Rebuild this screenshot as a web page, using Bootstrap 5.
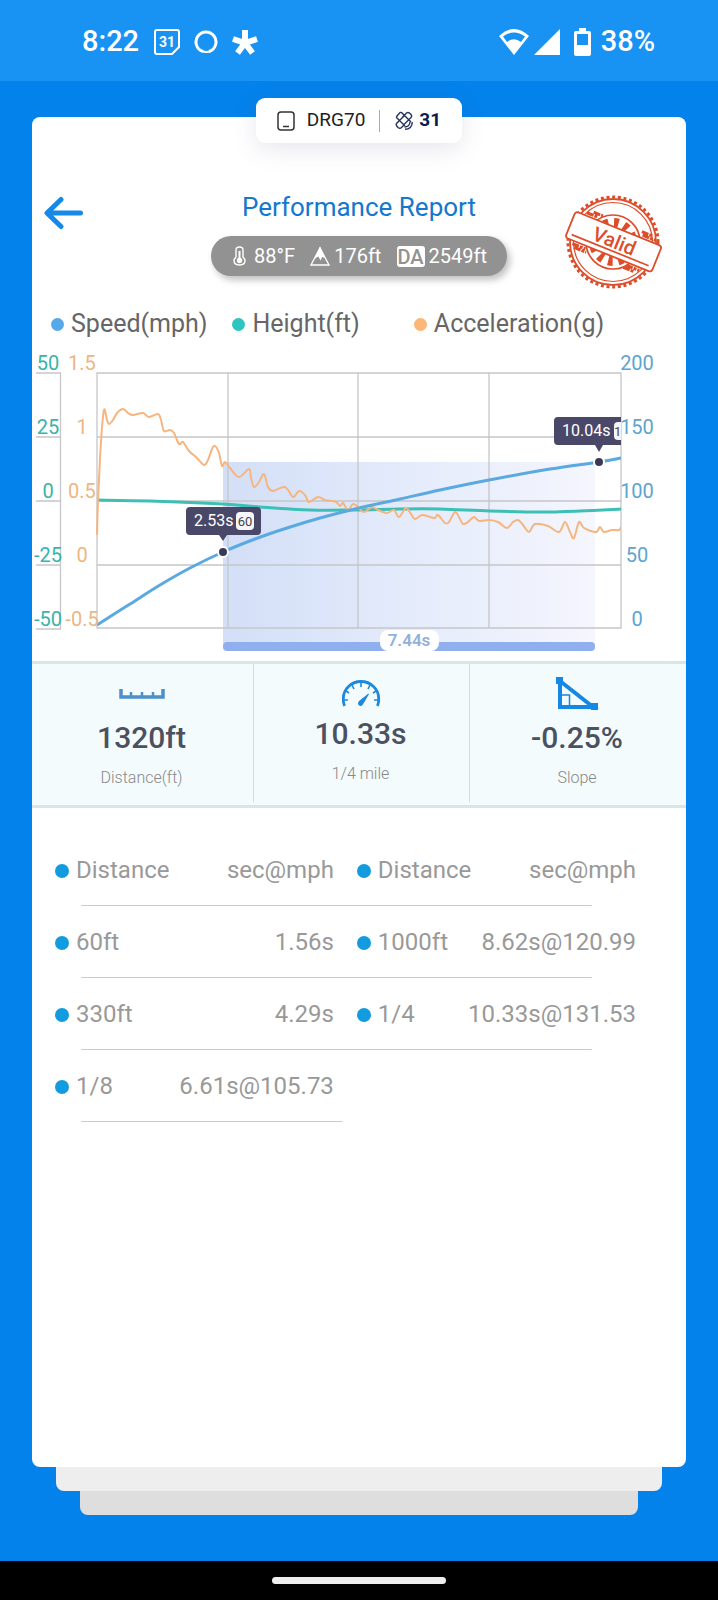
<!DOCTYPE html>
<html lang="en">
<head>
<meta charset="utf-8">
<meta name="viewport" content="width=device-width, initial-scale=1">
<title>Performance Report</title>
<link href="https://cdn.jsdelivr.net/npm/bootstrap@5.3.0/dist/css/bootstrap.min.css" rel="stylesheet">
<style>
  body { font-family: Roboto, "Liberation Sans", sans-serif; background: #0482eb; color: #666; }
  svg { display: block; flex: none; }
  .status-bar { height: 81px; background: #1893f4; color: #fff; padding: 2px 63px 0 82px; font-size: 29px; font-weight: 500; }
  .status-icons { gap: 14px; margin-left: 15px; }
  .stage { padding: 36px 32px 46px; }
  .sheet { border-radius: 8px; }
  .sheet-under { height: 24px; border-radius: 0 0 8px 8px; }
  .sheet-mid { margin: 0 24px; background: #eee; }
  .sheet-low { margin: 0 48px; background: #dedede; }
  .device-pill { height: 45px; width: 206px; margin-top: -19px; border-radius: 9px; font-size: 19px; color: #222; box-shadow: 0 6px 24px rgba(60, 70, 110, .13); }
  .device-pill .sep { width: 1px; height: 22px; margin: 0 15px 0 14px; background: #aaa; }
  .device-pill strong { color: #0d1b52; margin-left: 6px; }
  .report-head { display: grid; grid-template-columns: 1fr auto 1fr; margin-top: 48px; padding: 0 12px; height: 102px; }
  .report-title { font-size: 26px; line-height: 32px; font-weight: 400; color: #1478cd; margin-bottom: 13px; }
  .weather { width: 296px; height: 40px; border-radius: 20px; background: #929292; color: #fff; font-size: 20px; padding: 0 20px 0 22px; box-shadow: 3px 4px 7px rgba(0, 0, 0, .25); }
  .da-tag { background: #fff; color: #929292; border-radius: 3px; width: 28px; height: 21px; line-height: 22px; text-align: center; font-weight: 500; }
  .stamp { margin: 2px 10px 0 auto; }
  .legend-row { display: grid; grid-template-columns: 2fr 2fr 3fr; padding-left: 19px; margin-top: 13px; margin-bottom: 3px; font-size: 25px; line-height: 36px; }
  .key-dot { width: 13px; height: 13px; border-radius: 50%; margin-right: 7px; }
  .chart { width: 100%; height: auto; }
  .chart text { font-family: Roboto, "Liberation Sans", sans-serif; }
  .stats { display: grid; grid-template-columns: 221fr 216fr 217fr; height: 147px; background: #f3fbfc; border-top: 3px solid #d7e6e6; border-bottom: 3px solid #d7e6e6; text-align: center; }
  .stat { padding-right: 2px; }
  .stat + .stat { border-left: 1px solid #cfdfe1; margin-bottom: 3px; }
  .stat-icon { height: 48px; }
  .stat-value { font-size: 30px; line-height: 36px; font-weight: 500; color: #4c505f; }
  .stat-label { font-size: 16px; line-height: 20px; margin-top: 12px; font-weight: 300; color: #888; }
  .splits { table-layout: fixed; margin: 26px 50px 0 23px; width: calc(100% - 73px); font-size: 24px; line-height: 30px; color: #999; white-space: nowrap; }
  .splits tr { height: 72px; background: linear-gradient(#ccc, #ccc) no-repeat 26px 100% / 88% 1px; }
  .splits tbody tr:last-child { background-size: 45% 1px; }
  .splits th, .splits td { font-weight: 400; padding: 0; }
  .splits .wide-name { padding-left: 23px; }
  .splits .name::before { content: ""; display: inline-block; width: 14px; height: 14px; margin-right: 7px; border-radius: 50%; background: #129cdf; }
  .nav-strip { height: 39px; background: #000; }
  .nav-strip span { width: 174px; height: 7px; border-radius: 4px; background: #eee; }
</style>
</head>
<body class="d-flex flex-column min-vh-100">

<header class="status-bar d-flex align-items-center">
  <span>8:22</span>
  <div class="status-icons d-flex align-items-center">
    <svg width="26" height="26" viewBox="0 0 26 26" fill="none" stroke="#fff" stroke-width="2"><path d="M3 1H23Q25 1 25 3V18L18 25H3Q1 25 1 23V3Q1 1 3 1Z"/><text x="13" y="18" text-anchor="middle" font-size="14" font-weight="700" fill="#fff" stroke="none">31</text></svg>
    <svg width="24" height="24" viewBox="0 0 24 24" fill="none" stroke="#fff"><path d="M9 21.500A10 10 0 1 1 15 21.500" stroke-width="3"/><path d="M9 21.500Q17 23.500 20.500 17" stroke-width="2"/></svg>
    <svg width="26" height="26" viewBox="0 0 26 26" stroke="#fff" stroke-width="6"><path d="M13 14V1M13 14L25 10M13 14L20.500 24M13 14L5.500 24M13 14L1 10"/></svg>
  </div>
  <div class="ms-auto d-flex align-items-center">
    <svg width="32" height="28" viewBox="0 0 32 28"><path d="M16 27L1 8Q16-6 31 8Z" fill="#fff"/><path d="M9 14L5 8.500Q16 .500 27 8.500L23 14Q16 8.500 9 14Z" fill="#1893f4"/></svg>
    <svg class="ms-1" width="26" height="26" viewBox="0 0 26 26"><path d="M0 26H26V0Z" fill="#fff"/></svg>
    <svg class="ms-2 me-2" width="25" height="28" viewBox="-4 0 21 28"><path d="M5 0H12V3H15Q17 3 17 5V26Q17 28 15 28H2Q0 28 0 26V5Q0 3 2 3H5Z" fill="#fff"/><path d="M3 6H14V17H3Z" fill="#1893f4"/></svg>
    <span>38%</span>
  </div>
</header>

<main class="stage flex-grow-1 d-flex flex-column">
  <section class="sheet bg-white flex-grow-1">
    <div class="device-pill bg-white mx-auto position-relative d-flex align-items-center justify-content-center">
      <svg width="18" height="20" viewBox="0 0 18 20" fill="none" stroke="#333" stroke-width="1.500"><rect x="1" y="1" width="16" height="18" rx="3"/><path d="M6 15.500H12"/></svg>
      <span class="ms-2 ps-1">DRG70</span>
      <span class="sep"></span>
      <svg width="18" height="19" viewBox="0 0 18 19" fill="none" stroke="#26335c" stroke-width="1.400"><path d="M2 5L5 1.500Q6.500 1 7.500 2.500L16 11M2 5Q1 6.500 2.500 7.500L10 15M7.500 6L11.500 2Q13.500 .500 15.500 3Q17.500 5 16 6.500L12 10.500M5 9L1.500 12.500Q.500 14 3 16.500Q5 18 6.500 16.500L9.500 13.500M5 9L9 5M9 13.500L13 9.500M9.500 16Q14.500 16 15 11M10 18.300Q17 18.300 17.300 11"/></svg>
      <strong>31</strong>
    </div>

    <div class="report-head">
      <button type="button" class="btn p-0 border-0 align-self-start mt-1 text-start" aria-label="Back">
        <svg width="40" height="38" viewBox="0 0 40 38" fill="none" stroke="#1588e8" stroke-width="5" stroke-linecap="round" stroke-linejoin="round"><path d="M36.500 18H4M17 4.500L3 18L17 31.500"/></svg>
      </button>
      <div class="text-center">
        <h1 class="report-title">Performance Report</h1>
        <div class="weather d-flex align-items-center justify-content-between">
          <span class="d-flex align-items-center gap-2"><svg width="13" height="20" viewBox="0 0 13 20" fill="none" stroke="#fff" stroke-width="1.400"><path d="M3 11V4Q3 1 6.500 1T10 4V11Q12 13 12 14.500Q12 19 6.500 19T1 14.500Q1 13 3 11Z"/><path d="M6.500 5V13" stroke-width="2"/><circle cx="6.500" cy="14.500" r="2" fill="#fff"/></svg>88°F</span>
          <span class="d-flex align-items-center gap-1"><svg width="20" height="20" viewBox="0 0 20 20" fill="none" stroke="#fff" stroke-width="1.300"><path d="M10 2L19 19H1Z"/><path d="M10 2L14.500 11.500L12 9.500L10.500 13L8.500 9.500L5.500 11.500Z" fill="#fff"/></svg>176ft</span>
          <span class="d-flex align-items-center gap-1"><span class="da-tag">DA</span>2549ft</span>
        </div>
      </div>
      <svg class="stamp" width="100" height="98" viewBox="0 0 100 98" fill="none" stroke="#dc4e2b" role="img" aria-label="Valid">
        <circle cx="49" cy="49" r="45" stroke-width="3" stroke-dasharray="3 2.700"/>
        <circle cx="49" cy="49" r="43" stroke-width="1.800"/>
        <circle cx="49" cy="49" r="39.500" stroke-width="1.200"/>
        <circle cx="49" cy="49" r="27" stroke-width="1.700"/>
        <circle cx="49" cy="49" r="19" stroke-width="10" stroke-dasharray="4.500 5.500"/>
        <g transform="rotate(22 50 49)">
          <path d="M14 32H26M20 29H30M72 29H84M74 32H88M12 66H26M15 69H28M70 66H84M68 69H80" stroke-width="3" stroke-dasharray="7 1 3 1"/>
          <rect x="3" y="35" width="93" height="28" rx="3" fill="#fff" stroke-width="1.800"/>
          <path d="M8 58H91" stroke-width="1.700"/>
          <text x="50" y="55" text-anchor="middle" font-size="20" font-weight="500" fill="#dc4e2b" stroke="none">Valid</text>
        </g>
      </svg>
    </div>

    <div class="legend-row">
      <span class="d-flex align-items-center"><span class="key-dot" style="background:#55a9e8"></span>Speed(mph)</span>
      <span class="d-flex align-items-center"><span class="key-dot" style="background:#2dc5bd"></span>Height(ft)</span>
      <span class="d-flex align-items-center"><span class="key-dot" style="background:#fbb678"></span>Acceleration(g)</span>
    </div>

    <svg class="chart" viewBox="32 345 654 316">
      <defs>
        <linearGradient id="band"><stop offset="0" stop-color="#d3dff7"/><stop offset=".5" stop-color="#e4ebfb"/><stop offset="1" stop-color="#f5f6fe"/></linearGradient>
        <clipPath id="plot"><rect x="96" y="372" width="525" height="280"/></clipPath>
      </defs>
      <path d="M223 462H595V646H223Z" fill="url(#band)"/>
      <g fill="none" stroke="#c6c6c8" stroke-width="1.300">
        <path d="M36 373H60.500V629H36M36 437H60M36 501H60M36 565H60"/>
        <path d="M97 373H621V628H97ZM97 437H621M97 501H621M97 565H621M228 373V628M358 373V628M489 373V628"/>
      </g>
      <g id="series" fill="none" stroke-linejoin="round" clip-path="url(#plot)"></g>
      <g id="labels" font-size="20" text-anchor="middle"></g>
      <rect x="223" y="642" width="372" height="9" rx="4" fill="#90afee"/>
      <rect x="380" y="630" width="59" height="21" rx="8" fill="#fff"/>
      <text x="409" y="646" text-anchor="middle" font-size="17" font-weight="600" fill="#8fb1de">7.44s</text>
      <g>
        <path d="M190 507H257Q261 507 261 511V531Q261 535 257 535H227L223 541L219 535H190Q186 535 186 531V511Q186 507 190 507Z" fill="#4a4868"/>
        <text x="194" y="526" font-size="16" fill="#fff">2.53s</text>
        <rect x="236" y="512" width="18" height="18" rx="4" fill="#f5f5fa"/>
        <text x="245" y="526" font-size="13" text-anchor="middle" fill="#444">60</text>
        <circle cx="223" cy="552" r="5" fill="#3a3858" stroke="#fff" stroke-width="2"/>
      </g>
      <g clip-path="url(#plot)">
        <path d="M558 417H640V445H603L599 452L595 445H558Q554 445 554 441V421Q554 417 558 417Z" fill="#4a4868"/>
        <text x="562" y="436" font-size="16" fill="#fff">10.04s</text>
        <rect x="614" y="422" width="26" height="18" rx="4" fill="#f5f5fa"/>
        <text x="614" y="436" font-size="13" fill="#444">1</text>
        <circle cx="599" cy="462" r="5" fill="#3a3858" stroke="#fff" stroke-width="2"/>
      </g>
    </svg>

    <div class="stats">
      <div class="stat">
        <div class="stat-icon d-flex justify-content-center align-items-center pt-2"><svg class="mt-1" width="46" height="10" viewBox="0 0 46 10" fill="none" stroke="#4c8fc9"><path d="M2 0V8H44V0" stroke-width="3.500"/><path d="M12 3V8M23 3V8M34 3V8" stroke-width="2.500"/></svg></div>
        <div class="stat-value mt-2">1320ft</div>
        <div class="stat-label">Distance(ft)</div>
      </div>
      <div class="stat">
        <div class="stat-icon d-flex justify-content-center align-items-end"><svg class="mb-1" width="40" height="28" viewBox="0 0 40 28" fill="none" stroke="#1c89dc"><path d="M3.500 26Q2 22 2.300 18.500A17.700 17 0 0 1 37.700 18.500Q38 22 36.500 26" stroke-width="2.800"/><path d="M20 2V7M11 5L13 9M29 5L27 9M5 11L8 13M35 11L32 13M3 20H7M37 20H33" stroke-width="1.600"/><path d="M27.500 14L18 21.500Q16.500 25 19 25.500Q21 26 22 23.500Z" fill="#1c89dc"/></svg></div>
        <div class="stat-value mt-1">10.33s</div>
        <div class="stat-label">1/4 mile</div>
      </div>
      <div class="stat">
        <div class="stat-icon d-flex justify-content-center align-items-end"><svg width="44" height="36" viewBox="0 0 44 36" fill="none" stroke="#1588e5"><path d="M5 5V31H38Z" stroke-width="4"/><path d="M5 19H14.500V31" stroke-width="1.500"/><path d="M1 1H8V8H1ZM36 27H43V34H36Z" fill="#1588e5" stroke="none"/></svg></div>
        <div class="stat-value mt-2">-0.25%</div>
        <div class="stat-label">Slope</div>
      </div>
    </div>

    <table class="splits">
      <colgroup><col style="width:19%"><col style="width:29%"><col style="width:23%"><col style="width:29%"></colgroup>
      <thead>
        <tr><th scope="col" class="name">Distance</th><th scope="col" class="text-end">sec@mph</th><th scope="col" class="name wide-name">Distance</th><th scope="col" class="text-end">sec@mph</th></tr>
      </thead>
      <tbody>
        <tr><td class="name">60ft</td><td class="text-end">1.56s</td><td class="name wide-name">1000ft</td><td class="text-end">8.62s@120.99</td></tr>
        <tr><td class="name">330ft</td><td class="text-end">4.29s</td><td class="name wide-name">1/4</td><td class="text-end">10.33s@131.53</td></tr>
        <tr><td class="name">1/8</td><td class="text-end">6.61s@105.73</td><td></td><td></td></tr>
      </tbody>
    </table>
  </section>
  <div class="sheet-under sheet-mid"></div>
  <div class="sheet-under sheet-low"></div>
</main>

<footer class="nav-strip d-flex justify-content-center align-items-center"><span></span></footer>

<script>
  const NS = 'http://www.w3.org/2000/svg';
  function add(parent, tag, attrs, text) {
    const el = document.createElementNS(NS, tag);
    for (const k in attrs) el.setAttribute(k, attrs[k]);
    if (text !== undefined) el.textContent = text;
    document.getElementById(parent).append(el);
  }
  // Smooth curve through the sample points (Catmull-Rom turned into Béziers)
  function smooth(p) {
    let d = 'M' + p[0];
    for (let i = 0; i < p.length - 1; i++) {
      const a = p[i - 1] || p[i], b = p[i], c = p[i + 1], e = p[i + 2] || c;
      d += 'C' + [b[0] + (c[0] - a[0]) / 6, b[1] + (c[1] - a[1]) / 6, c[0] - (e[0] - b[0]) / 6, c[1] - (e[1] - b[1]) / 6, c[0], c[1]].join(' ');
    }
    return d;
  }
  const height = [[97,500],[150,501],[223,504],[260,507],[310,510],[355,510],[400,509],[440,509],[490,511],[540,512],[580,511],[621,509]];
  const accel = [[97,535],[98,502],[101,442],[104,410],[107,420],[109,424],[113,420],[117,413],[123,409],[128,413],[133,415],[143,413],[149,417],[158,414],[161,420],[164,431],[170,430],[174,433],[179,444],[183,442],[189,451],[197,458],[204,465],[208,460],[212,449],[215,446],[219,453],[222,466],[225,462],[230,468],[239,477],[249,469],[251,478],[254,487],[259,482],[264,474],[268,487],[273,491],[285,487],[293,497],[299,491],[305,495],[309,502],[318,497],[325,500],[336,502],[340,506],[343,503],[348,510],[353,504],[358,507],[364,512],[372,507],[378,510],[387,513],[394,510],[399,517],[406,508],[411,514],[415,519],[422,515],[430,517],[435,518],[438,515],[445,523],[449,522],[455,512],[460,519],[463,524],[468,522],[474,517],[479,521],[489,520],[498,522],[507,528],[513,522],[518,520],[523,525],[529,532],[535,524],[548,526],[559,532],[565,522],[570,532],[574,538],[579,522],[584,528],[596,532],[600,527],[604,532],[612,530],[619,530],[621,527]];
  const speed = [[97,625],[130,604],[160,585],[190,568],[223,552],[255,539],[287,528],[320,518],[355,509],[400,499],[440,490],[489,480],[550,469],[599,462],[621,458]];
  add('series', 'path', { d: smooth(height), stroke: '#3dbfb5', 'stroke-width': 3 });
  add('series', 'path', { d: smooth(accel), stroke: '#f6b57f', 'stroke-width': 2 });
  add('series', 'path', { d: smooth(speed), stroke: '#5aa9e0', 'stroke-width': 3 });
  // One row of scale labels for each horizontal grid line
  [['50', '1.5', '200'], ['25', '1', '150'], ['0', '0.5', '100'], ['-25', '0', '50'], ['-50', '-0.5', '0']].forEach((row, i) => {
    const y = 370 + 64 * i;
    add('labels', 'text', { x: 48, y, fill: '#35b5ab' }, row[0]);
    add('labels', 'text', { x: 82, y, fill: '#eeb583' }, row[1]);
    add('labels', 'text', { x: 637, y, fill: '#5ba5d0' }, row[2]);
  });
</script>
<script src="https://cdn.jsdelivr.net/npm/bootstrap@5.3.0/dist/js/bootstrap.bundle.min.js"></script>
</body>
</html>
